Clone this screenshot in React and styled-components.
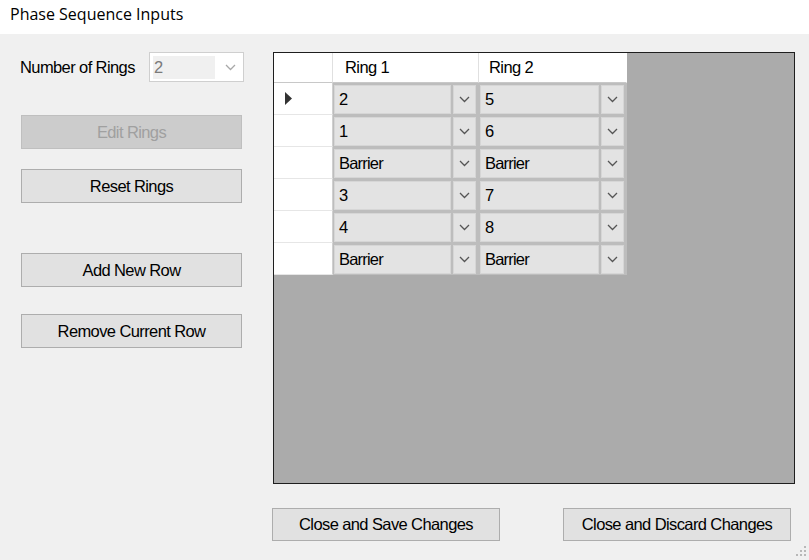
import React from "react";
import styled, { createGlobalStyle } from "styled-components";

const Global = createGlobalStyle`
  html, body { margin: 0; padding: 0; background: #f0f0f0; }
  body { width: 809px; height: 560px; overflow: hidden; font-family: "Liberation Sans", Arial, sans-serif; }
  * { box-sizing: border-box; }
`;

const Window = styled.div`
  position: relative;
  width: 809px;
  height: 560px;
  background: #f0f0f0;
  display: flex;
  flex-direction: column;
`;

const TitleBar = styled.div`
  height: 34px;
  background: #ffffff;
  display: flex;
  align-items: flex-start;
  padding: 3px 0 0 10px;
  font-family: "Open Sans", "Noto Sans", sans-serif;
  font-size: 16px;
  color: #000;
`;

const Main = styled.div`
  display: flex;
  flex: 1;
`;

const LeftPanel = styled.div`
  width: 272px;
  padding: 18px 0 0 20px;
  display: flex;
  flex-direction: column;
`;

const RingsRow = styled.div`
  display: flex;
  align-items: center;
  height: 30px;
  font-size: 16.5px;
  letter-spacing: -0.6px;
  color: #000;
`;

const Label = styled.span`
  width: 129px;
`;

const Combo = styled.div`
  width: 95px;
  height: 30px;
  background: #fff;
  border: 1px solid #cfcfcf;
  display: flex;
  align-items: center;
  padding: 2px 7px 2px 3px;
`;

const ComboValue = styled.div`
  width: 62px;
  height: 23px;
  background: #f0f0f0;
  color: #7a7a7a;
  display: flex;
  align-items: center;
  padding-left: 1px;
`;

const ComboArrow = styled.div`
  margin-left: auto;
  display: flex;
  align-items: center;
`;

const Button = styled.button`
  width: ${(p) => p.$w || 221}px;
  height: ${(p) => p.$h || 34}px;
  margin-top: ${(p) => p.$mt || 0}px;
  margin-left: ${(p) => p.$ml || 0}px;
  background: ${(p) => (p.disabled ? "#cccccc" : "#e1e1e1")};
  border: 1px solid ${(p) => (p.disabled ? "#bfbfbf" : "#adadad")};
  color: ${(p) => (p.disabled ? "#a0a0a0" : "#000")};
  font-family: "Liberation Sans", Arial, sans-serif;
  font-size: 16.5px;
  letter-spacing: -0.6px;
  padding: 0;
  cursor: default;
`;

const RightPanel = styled.div`
  padding-top: 18px;
  display: flex;
  flex-direction: column;
  margin-left: 1px;
`;

const GridFrame = styled.div`
  width: 522px;
  height: 432px;
  border: 1px solid #1e1e1e;
  background: #ababab;
  display: grid;
  grid-template-columns: 59px 146px 148px;
  grid-auto-rows: 32px;
  grid-template-rows: 30px;
  align-content: start;
  justify-content: start;
`;

const HeaderCell = styled.div`
  background: #fff;
  border-right: 1px solid ${(p) => (p.$last ? "#ffffff" : "#e0e0e0")};
  border-bottom: 1px solid #c8c8c8;
  display: flex;
  align-items: center;
  padding-left: ${(p) => p.$pad || 0}px;
  font-size: 16.5px;
  letter-spacing: -0.6px;
  color: #000;
`;

const RowHeader = styled.div`
  background: #fff;
  border-bottom: 1px solid #e6e6e6;
  border-right: 1px solid #d0d0d0;
  display: flex;
  align-items: center;
  padding-left: 11px;
`;

const ComboCell = styled.div`
  background: #bdbdbd;
  display: flex;
  padding: 2px 3px 1px 1px;
  gap: 2px;
`;

const CellFace = styled.div`
  flex: 1;
  background: #e3e3e3;
  border: 1px solid #d6d6d6;
  display: flex;
  align-items: center;
  padding-left: 4px;
  font-size: 16.5px;
  letter-spacing: -0.8px;
  color: #000;
`;

const CellButton = styled.div`
  width: 23px;
  background: #e3e3e3;
  border: 1px solid #d6d6d6;
  display: flex;
  align-items: center;
  justify-content: center;
`;

const BottomBar = styled.div`
  display: flex;
  margin-top: 24px;
  gap: 63px;
`;

const Grip = styled.svg`
  position: absolute;
  right: 2px;
  bottom: 3px;
`;

const Chevron = ({ color = "#555" }) => (
  <svg width="11" height="7" viewBox="0 0 11 7">
    <polyline points="1,1 5.5,5.5 10,1" fill="none" stroke={color} strokeWidth="1.3" />
  </svg>
);

const rows = [
  ["2", "5"],
  ["1", "6"],
  ["Barrier", "Barrier"],
  ["3", "7"],
  ["4", "8"],
  ["Barrier", "Barrier"],
];

export default function App() {
  return (
    <Window>
      <Global />
      <TitleBar>Phase Sequence Inputs</TitleBar>
      <Main>
        <LeftPanel>
          <RingsRow>
            <Label>Number of Rings</Label>
            <Combo>
              <ComboValue>2</ComboValue>
              <ComboArrow>
                <Chevron color="#a8a8a8" />
              </ComboArrow>
            </Combo>
          </RingsRow>
          <Button $mt={33} $ml={1} disabled>
            Edit Rings
          </Button>
          <Button $mt={20} $ml={1}>Reset Rings</Button>
          <Button $mt={50} $ml={1}>Add New Row</Button>
          <Button $mt={27} $ml={1}>Remove Current Row</Button>
        </LeftPanel>
        <RightPanel>
          <GridFrame>
            <HeaderCell />
            <HeaderCell $pad={12}>Ring 1</HeaderCell>
            <HeaderCell $pad={10} $last>
              Ring 2
            </HeaderCell>
            {rows.map((r, i) => (
              <React.Fragment key={i}>
                <RowHeader>
                  {i === 0 && (
                    <svg width="8" height="13" viewBox="0 0 8 13">
                      <polygon points="0,0 7,6.5 0,13" fill="#333" />
                    </svg>
                  )}
                </RowHeader>
                {r.map((v, j) => (
                  <ComboCell key={j}>
                    <CellFace>{v}</CellFace>
                    <CellButton>
                      <Chevron />
                    </CellButton>
                  </ComboCell>
                ))}
              </React.Fragment>
            ))}
          </GridFrame>
          <BottomBar>
            <Button $w={228} $h={33} $ml={-1}>Close and Save Changes</Button>
            <Button $w={228} $h={33}>Close and Discard Changes</Button>
          </BottomBar>
        </RightPanel>
      </Main>
      <Grip width="12" height="12" viewBox="0 0 12 12">
        {[
          [9, 1],
          [5, 5],
          [9, 5],
          [1, 9],
          [5, 9],
          [9, 9],
        ].map(([x, y], k) => (
          <rect key={k} x={x} y={y} width="2" height="2" fill="#b8b8b8" />
        ))}
      </Grip>
    </Window>
  );
}
